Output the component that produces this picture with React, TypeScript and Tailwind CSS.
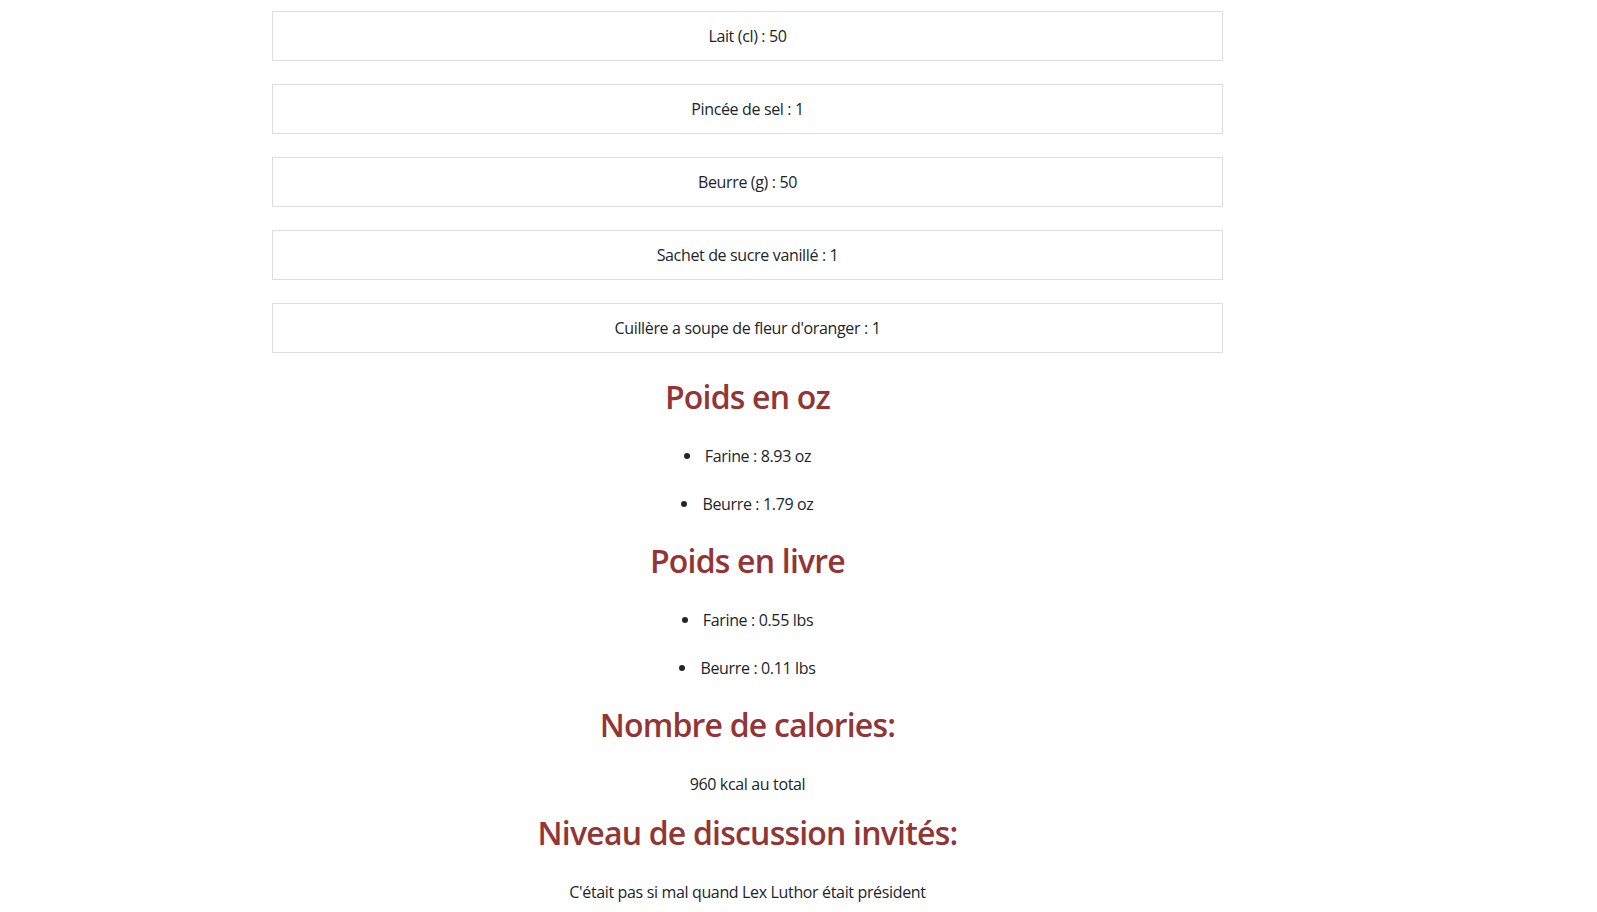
const ingredients = [
  "Lait (cl) : 50",
  "Pincée de sel : 1",
  "Beurre (g) : 50",
  "Sachet de sucre vanillé : 1",
  "Cuillère a soupe de fleur d'oranger : 1",
];

const ozList = ["Farine : 8.93 oz", "Beurre : 1.79 oz"];
const lbsList = ["Farine : 0.55 lbs", "Beurre : 0.11 lbs"];

function Heading({ children, className }: { children: string; className: string }) {
  return (
    <h2
      className={`text-[32px] leading-[38px] font-semibold tracking-[-0.8px] text-[#933535] text-center ${className}`}
    >
      {children}
    </h2>
  );
}

function Bullets({ items }: { items: string[] }) {
  return (
    <ul className="mt-[28px] flex flex-col gap-[24px]">
      {items.map((item) => (
        <li key={item} className="flex items-center justify-center gap-[15px] leading-[24px]">
          <span className="w-[6px] h-[6px] rounded-full bg-[#212529]" />
          <span>{item}</span>
        </li>
      ))}
    </ul>
  );
}

export default function App() {
  return (
    <div className="min-h-screen bg-white text-[16px] tracking-[-0.35px] text-[#212529] font-['Open_Sans',sans-serif]">
      <div className="ml-[272px] w-[951px] pt-[11px] pb-[10px]">
        {/* Ingredients */}
        <div className="flex flex-col gap-[23px]">
          {ingredients.map((ing) => (
            <div
              key={ing}
              className="h-[50px] flex items-center justify-center border border-[#dddddd] leading-[24px]"
            >
              {ing}
            </div>
          ))}
        </div>

        <Heading className="mt-[25px]">Poids en oz</Heading>
        <Bullets items={ozList} />

        <Heading className="mt-[26px]">Poids en livre</Heading>
        <Bullets items={lbsList} />

        <Heading className="mt-[26px]">Nombre de calories:</Heading>
        <p className="mt-[28px] text-center leading-[24px]">960 kcal au total</p>

        <Heading className="mt-[18px]">Niveau de discussion invités:</Heading>
        <p className="mt-[28px] text-center leading-[24px]">
          C'était pas si mal quand Lex Luthor était président
        </p>
      </div>
    </div>
  );
}
